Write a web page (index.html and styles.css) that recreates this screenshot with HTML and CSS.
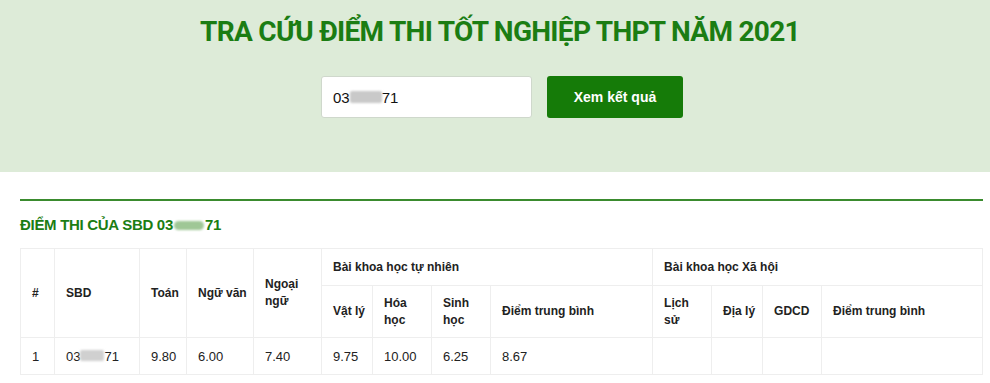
FILE: index.html
```html
<!DOCTYPE html>
<html lang="vi">
<head>
    <meta charset="UTF-8">
    <meta name="viewport" content="width=device-width, initial-scale=1.0">
    <title>Tra cứu điểm thi tốt nghiệp THPT năm 2021</title>
    <link rel="stylesheet" href="styles.css">
</head>
<body>
    <header class="search-band">
        <h1 class="title">TRA CỨU ĐIỂM THI TỐT NGHIỆP THPT NĂM 2021</h1>
        <form class="search-form">
            <div class="search-input">03<span class="mask"></span>71</div>
            <button type="submit" class="search-btn">Xem kết quả</button>
        </form>
    </header>

    <main class="result">
        <h2 class="result-title">ĐIỂM THI CỦA SBD 03<span class="mask mask-green"></span>71</h2>
        <table class="scores">
            <colgroup>
                <col style="width:34px">
                <col style="width:85px">
                <col style="width:47px">
                <col style="width:67px">
                <col style="width:68px">
                <col style="width:51px">
                <col style="width:59px">
                <col style="width:59px">
                <col style="width:162px">
                <col style="width:59px">
                <col style="width:51px">
                <col style="width:59px">
                <col>
            </colgroup>
            <thead>
                <tr class="row-top">
                    <th rowspan="2">#</th>
                    <th rowspan="2">SBD</th>
                    <th rowspan="2">Toán</th>
                    <th rowspan="2" class="nowrap">Ngữ văn</th>
                    <th rowspan="2">Ngoại ngữ</th>
                    <th colspan="4">Bài khoa học tự nhiên</th>
                    <th colspan="4">Bài khoa học Xã hội</th>
                </tr>
                <tr class="row-sub">
                    <th class="nowrap">Vật lý</th>
                    <th>Hóa học</th>
                    <th>Sinh học</th>
                    <th>Điểm trung bình</th>
                    <th>Lịch sử</th>
                    <th class="nowrap">Địa lý</th>
                    <th>GDCD</th>
                    <th>Điểm trung bình</th>
                </tr>
            </thead>
            <tbody>
                <tr>
                    <td>1</td>
                    <td>03<span class="mask mask-cell"></span>71</td>
                    <td>9.80</td>
                    <td>6.00</td>
                    <td>7.40</td>
                    <td>9.75</td>
                    <td>10.00</td>
                    <td>6.25</td>
                    <td>8.67</td>
                    <td></td>
                    <td></td>
                    <td></td>
                    <td></td>
                </tr>
            </tbody>
        </table>
    </main>
</body>
</html>
```

FILE: styles.css
```css
body {
    margin: 0;
    background: #fff;
    font-family: "Liberation Sans", Arial, sans-serif;
    color: #222;
}

.search-band {
    background: #ddebd8;
    height: 172px;
    padding-top: 14px;
    box-sizing: border-box;
}
.title {
    margin: 0;
    padding-left: 10px;
    text-align: center;
    color: #1b7d13;
    font-family: Roboto, "Liberation Sans", sans-serif;
    font-size: 28px;
    font-weight: 700;
    letter-spacing: -0.7px;
    line-height: 36px;
}
.search-form {
    display: flex;
    justify-content: center;
    gap: 15px;
    margin-top: 26px;
    padding-left: 14px;
}
.search-input {
    width: 211px;
    height: 42px;
    box-sizing: border-box;
    background: #fff;
    border: 1px solid #cfd8cc;
    border-radius: 3px;
    padding: 0 11px;
    display: flex;
    align-items: center;
    font-size: 15px;
    color: #111;
}
.search-btn {
    width: 136px;
    height: 42px;
    background: #157b08;
    color: #fff;
    border: none;
    border-radius: 3px;
    font-family: "Liberation Sans", Arial, sans-serif;
    font-size: 14px;
    font-weight: 700;
    cursor: pointer;
}

.mask {
    display: inline-block;
    width: 32px;
    height: 12px;
    background: #c9c9c9;
    border-radius: 2px;
    filter: blur(1px);
}
.mask-green {
    width: 30px;
    height: 9px;
    background: #9fc796;
    border-radius: 5px;
    margin: 0 1px;
}
.mask-cell {
    width: 24px;
    height: 11px;
    background: #d0d0d0;
}

.result {
    margin: 27px 7px 0 20px;
    border-top: 2px solid #3a8b2e;
}
.result-title {
    margin: 14px 0 13px;
    color: #1b7d13;
    font-size: 15px;
    font-weight: 700;
    letter-spacing: -0.3px;
    line-height: 20px;
}

.scores {
    width: 100%;
    border-collapse: collapse;
    table-layout: fixed;
    font-size: 13px;
}
.scores th,
.scores td {
    border: 1px solid #eeeeee;
    text-align: left;
    padding: 0 8px 0 11px;
    line-height: 17px;
}
.scores th {
    font-size: 12px;
    font-weight: 700;
    color: #222;
}
.scores th.nowrap {
    white-space: nowrap;
}
.row-top th {
    height: 36px;
}
.row-sub th {
    height: 51px;
}
.scores td {
    height: 36px;
}
```
